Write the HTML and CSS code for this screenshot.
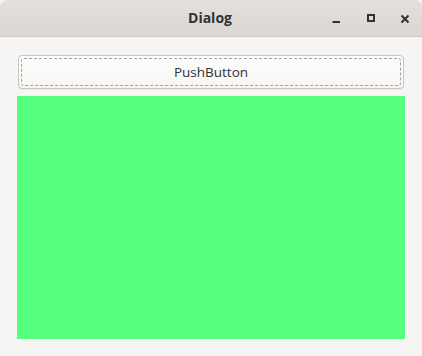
FILE: index.html
```html
<!DOCTYPE html>
<html>
<head>
<meta charset="utf-8">
<link rel="stylesheet" href="styles.css">
</head>
<body>
<div class="window">
  <div class="titlebar">
    <div class="title">Dialog</div>
    <div class="controls">
      <svg class="ctl" width="16" height="16" viewBox="0 0 16 16"><rect x="3.5" y="10" width="7.5" height="2" fill="#2e3436"/></svg>
      <svg class="ctl" width="16" height="16" viewBox="0 0 16 16"><rect x="5" y="4" width="6" height="6" fill="none" stroke="#2e3436" stroke-width="2"/></svg>
      <svg class="ctl" width="16" height="16" viewBox="0 0 16 16"><path d="M4.5 4.5 L11.5 11.5 M11.5 4.5 L4.5 11.5" stroke="#2e3436" stroke-width="2"/></svg>
    </div>
  </div>
  <div class="content">
    <button class="btn"><span class="focus">PushButton</span></button>
    <div class="green"></div>
  </div>
</div>
</body>
</html>
```
FILE: styles.css
```css
html, body {
  margin: 0;
  padding: 0;
  background: #f6f5f4;
  width: 422px;
  height: 356px;
  overflow: hidden;
}
.window {
  width: 422px;
  height: 356px;
  display: flex;
  flex-direction: column;
  background: #f6f5f4;
  border-radius: 7px 7px 0 0;
  overflow: hidden;
  font-family: "Open Sans", "DejaVu Sans", sans-serif;
}
.titlebar {
  height: 37px;
  flex: none;
  background: linear-gradient(#e3e0dd, #dad7d3);
  border-bottom: 1px solid #cfcbc6;
  box-sizing: border-box;
  position: relative;
  display: flex;
  align-items: center;
  justify-content: center;
}
.title {
  font-weight: bold;
  font-size: 14px;
  color: #2e3436;
  margin-top: -1px;
  margin-left: -2px;
}
.controls {
  position: absolute;
  right: 9px;
  top: 11px;
  display: flex;
  gap: 18px;
}
.ctl {
  display: block;
}
.content {
  flex: 1;
  display: flex;
  flex-direction: column;
  padding: 18px 17px 17px 17px;
  gap: 7px;
}
.btn {
  margin: 0 1px;
  height: 34px;
  border: 1px solid #c9c5c0;
  border-radius: 4px;
  background: linear-gradient(#fdfdfc, #f7f6f5);
  padding: 2px;
  box-shadow: 0 1px 0 rgba(0,0,0,0.05);
  font-family: "Open Sans", "DejaVu Sans", sans-serif;
  font-size: 13.5px;
  color: #2e3436;
  display: flex;
}
.focus {
  flex: 1;
  border: 1px dashed #a0a0a0;
  border-radius: 3px;
  display: flex;
  align-items: center;
  justify-content: center;
}
.green {
  flex: 1;
  background: #55ff7f;
}
```
